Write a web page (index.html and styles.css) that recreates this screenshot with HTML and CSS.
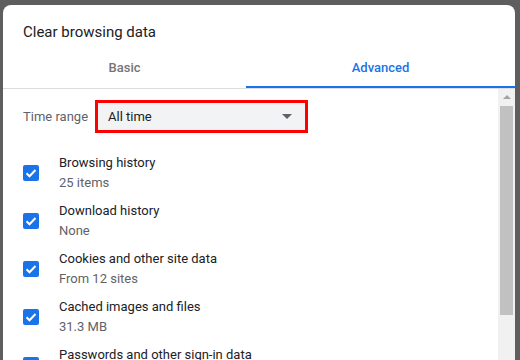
FILE: index.html
```html
<!DOCTYPE html>
<html lang="en">
<head>
  <meta charset="UTF-8" />
  <title>Clear browsing data</title>
  <link rel="stylesheet" href="styles.css">
</head>
<body>
  <div class="dialog">
    <div class="title">Clear browsing data</div>
    <div class="tabs">
      <div class="tab basic">Basic</div>
      <div class="tab active">Advanced</div>
    </div>
    <div class="body">
      <div class="content">
        <div class="range-row">
          <span class="range-label">Time range</span>
          <div class="select">
            <span>All time</span>
            <span class="caret"></span>
          </div>
        </div>
        <div class="item">
          <span class="check"><svg viewBox="0 0 16 16"><path d="M3.5 8.2l3 3 6-6.2"/></svg></span>
          <div class="text"><div class="name">Browsing history</div><div class="sub">25 items</div></div>
        </div>
        <div class="item">
          <span class="check"><svg viewBox="0 0 16 16"><path d="M3.5 8.2l3 3 6-6.2"/></svg></span>
          <div class="text"><div class="name">Download history</div><div class="sub">None</div></div>
        </div>
        <div class="item">
          <span class="check"><svg viewBox="0 0 16 16"><path d="M3.5 8.2l3 3 6-6.2"/></svg></span>
          <div class="text"><div class="name">Cookies and other site data</div><div class="sub">From 12 sites</div></div>
        </div>
        <div class="item">
          <span class="check"><svg viewBox="0 0 16 16"><path d="M3.5 8.2l3 3 6-6.2"/></svg></span>
          <div class="text"><div class="name">Cached images and files</div><div class="sub">31.3 MB</div></div>
        </div>
        <div class="item">
          <span class="check"><svg viewBox="0 0 16 16"><path d="M3.5 8.2l3 3 6-6.2"/></svg></span>
          <div class="text"><div class="name">Passwords and other sign-in data</div><div class="sub">None</div></div>
        </div>
      </div>
      <div class="scrollbar">
        <div class="arrow"></div>
        <div class="thumb"></div>
      </div>
    </div>
  </div>
</body>
</html>
```
FILE: styles.css
```css
* { margin: 0; padding: 0; box-sizing: border-box; }
body {
  font-family: Roboto, "Liberation Sans", sans-serif;
  background: #5e5e5e;
  height: 100vh;
  overflow: hidden;
  color: #202124;
}
.dialog {
  margin: 5px 0 0 3px;
  width: 512px;
  height: 400px;
  background: #fff;
  border-radius: 8px 8px 0 0;
  display: flex;
  flex-direction: column;
  overflow: hidden;
}
.title {
  padding: 17px 20px 0;
  height: 43px;
  font-size: 15px;
  line-height: 20px;
}
.tabs {
  display: flex;
  height: 41px;
  border-bottom: 1px solid #dadce0;
}
.tab {
  flex: 1;
  display: flex;
  align-items: center;
  justify-content: center;
  font-size: 13px;
  font-weight: 500;
  color: #757575;
}
.tab.basic {
  flex: 0 0 243px;
  padding-bottom: 2px;
}
.tab.active {
  color: #1a73e8;
  border-bottom: 2px solid #1a73e8;
}
.body {
  flex: 1;
  display: flex;
}
.content {
  flex: 1;
  padding: 11px 0 0 20px;
}
.range-row {
  display: flex;
  align-items: center;
  height: 33px;
  margin-bottom: 15px;
}
.range-label {
  font-size: 13px;
  color: #5f6368;
  width: 72px;
}
.select {
  width: 213px;
  height: 33px;
  border: 3px solid #f00;
  background: #f1f3f4;
  display: flex;
  align-items: center;
  justify-content: space-between;
  padding: 0 13px 0 10px;
  font-size: 13px;
}
.caret {
  width: 0;
  height: 0;
  border-left: 5px solid transparent;
  border-right: 5px solid transparent;
  border-top: 5px solid #5f6368;
}
.item {
  display: flex;
  align-items: center;
  height: 48px;
}
.check {
  width: 16px;
  height: 16px;
  border-radius: 2px;
  background: #1a73e8;
  margin: 2px 20px 0 0;
  display: flex;
}
.check svg {
  width: 16px;
  height: 16px;
  fill: none;
  stroke: #fff;
  stroke-width: 2;
}
.text {
  font-size: 13px;
  line-height: 20px;
  padding-top: 1px;
}
.sub {
  color: #5f6368;
}
.scrollbar {
  width: 17px;
  background: #f1f1f1;
  display: flex;
  flex-direction: column;
  align-items: center;
}
.arrow {
  margin-top: 6px;
  width: 0;
  height: 0;
  border-left: 4px solid transparent;
  border-right: 4px solid transparent;
  border-bottom: 4px solid #a3a3a3;
}
.thumb {
  margin-top: 7px;
  width: 13px;
  height: 209px;
  background: #c1c1c1;
}
```
